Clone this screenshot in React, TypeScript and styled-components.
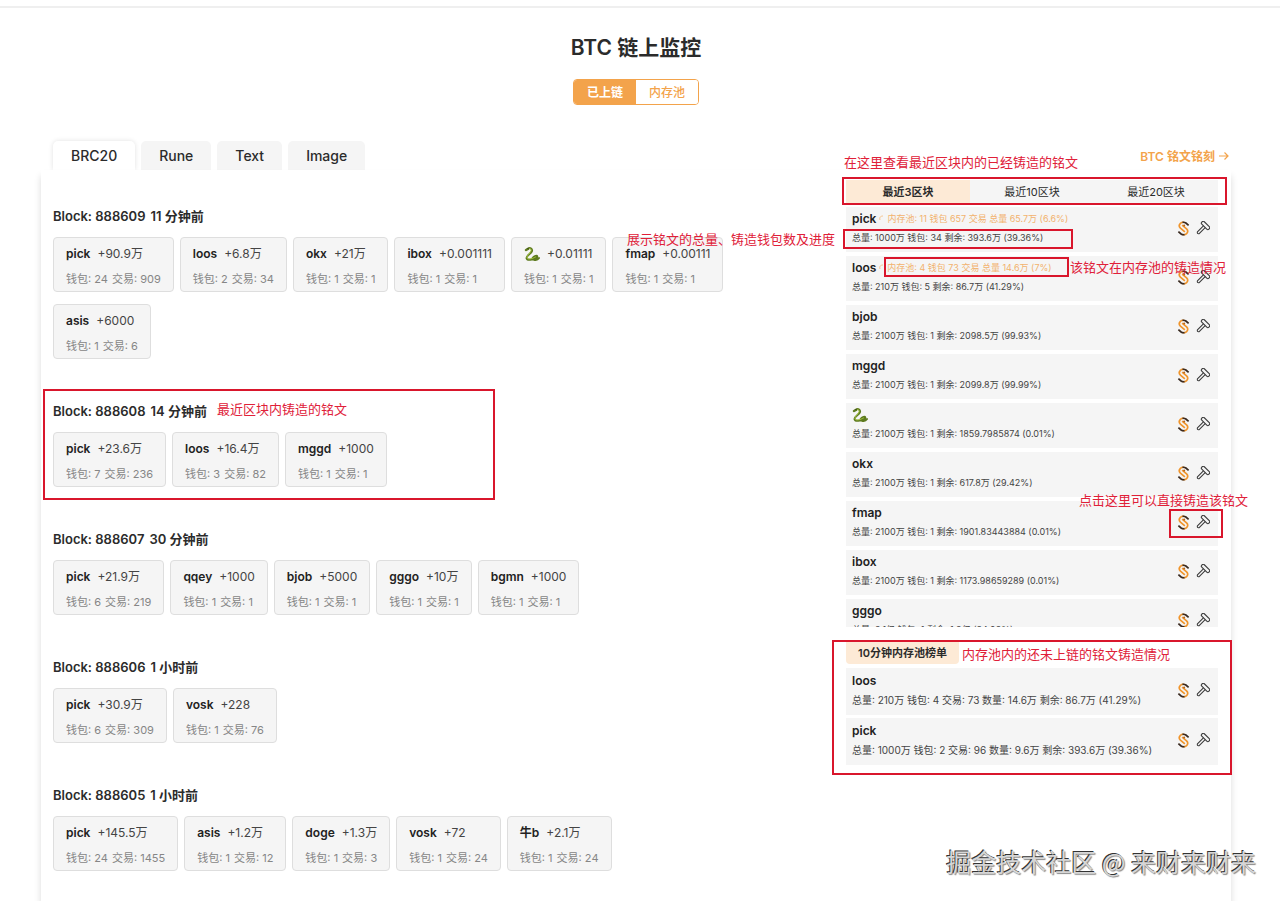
import React from "react";
import styled, { createGlobalStyle, css } from "styled-components";

const ORANGE = "#f3a34b";
const RED = "#d9162c";

const GlobalStyle = createGlobalStyle`
  *, *::before, *::after { box-sizing: border-box; }
  body {
    margin: 0;
    background: #fff;
    color: #2b2b2b;
    font-family: Inter, "Noto Sans CJK SC", sans-serif;
    font-size: 13px;
  }
  button { font: inherit; color: inherit; border: 0; padding: 0; background: none; cursor: pointer; }
  h1, h2, h3, p, ul { margin: 0; padding: 0; }
  ul { list-style: none; }
`;

const Page = styled.div`
  position: relative;
  display: flex;
  flex-direction: column;
  min-height: 100vh;
  padding: 6px 49px 0 41px;
  overflow: hidden;
`;

const TopRule = styled.div`
  height: 2px;
  margin: 0 -49px 0 -41px;
  background: #efefef;
`;

const Header = styled.header`
  display: flex;
  flex-direction: column;
  align-items: center;
  gap: 17px;
  padding-top: 26px;
`;

const Title = styled.h1`
  font-size: 21px;
  line-height: 28px;
  font-weight: 600;
`;

const Segmented = styled.div`
  display: flex;
  width: 126px;
  height: 26px;
  border: 1px solid ${ORANGE};
  border-radius: 4px;
  overflow: hidden;
`;

const Segment = styled.button<{ $active?: boolean }>`
  flex: 1;
  padding-bottom: 2px;
  font-size: 12px;
  font-weight: ${(p) => (p.$active ? 600 : 500)};
  color: ${(p) => (p.$active ? "#fff" : ORANGE)};
  background: ${(p) => (p.$active ? ORANGE : "#fff")};
`;

const TabBar = styled.nav`
  display: flex;
  align-items: flex-end;
  gap: 6px;
  margin-top: 36px;
  padding: 0 2px 0 12px;
`;

const Tab = styled.button<{ $active?: boolean }>`
  height: 29px;
  padding: 0 18px 1px;
  border-radius: 5px 5px 0 0;
  font-size: 14px;
  font-weight: 500;
  background: ${(p) => (p.$active ? "#fff" : "#f5f5f5")};
  box-shadow: ${(p) => (p.$active ? "0 0 5px rgba(0, 0, 0, 0.12)" : "none")};
`;

const InscribeLink = styled.a`
  display: flex;
  align-items: center;
  align-self: center;
  gap: 4px;
  margin-left: auto;
  font-size: 12px;
  font-weight: 600;
  color: ${ORANGE};
  text-decoration: none;
`;

const Panel = styled.main`
  position: relative;
  flex: 1;
  display: flex;
  align-items: flex-start;
  gap: 30px;
  padding: 10px 13px 0 12px;
  background: #fff;
  box-shadow: 0 6px 7px rgba(0, 0, 0, 0.14);
`;

const Blocks = styled.div`
  flex: 1;
  min-width: 0;
  display: flex;
  flex-direction: column;
  gap: 42px;
  padding-top: 26px;
`;

const Block = styled.section`
  position: relative;
`;

const BlockTitle = styled.h2`
  display: flex;
  gap: 5px;
  margin-bottom: 11px;
  font-size: 13px;
  line-height: 20px;
  font-weight: 600;
`;

const Cards = styled.div`
  display: flex;
  flex-wrap: wrap;
  gap: 12px 6px;
`;

const Card = styled.article`
  display: flex;
  flex-direction: column;
  gap: 8px;
  height: 55px;
  padding: 7px 12px;
  border: 1px solid #dedede;
  border-radius: 4px;
  background: #f5f5f5;
`;

const CardHead = styled.div`
  display: flex;
  align-items: center;
  gap: 7px;
  font-size: 12px;
  line-height: 18px;
  color: #444;
`;

const Ticker = styled.h3`
  display: flex;
  align-items: center;
  font-size: 12px;
  line-height: 16px;
  font-weight: 600;
  color: #222;
`;

const CardMeta = styled.div`
  display: flex;
  gap: 4px;
  font-size: 11px;
  line-height: 16px;
  color: #868686;
`;

const Sidebar = styled.aside`
  position: relative;
  width: 372px;
  flex: none;
`;

const RangeTabs = styled.div`
  display: flex;
  margin-bottom: 3px;
  background: #f5f5f5;
`;

const RangeTab = styled.button<{ $active?: boolean }>`
  flex: 1;
  height: 24px;
  padding-bottom: 2px;
  font-size: 11px;
  font-weight: ${(p) => (p.$active ? 600 : 400)};
  background: ${(p) => (p.$active ? "#fdead6" : "transparent")};
`;

const RankList = styled.ul`
  display: flex;
  flex-direction: column;
  gap: 4px;
  height: 420px;
  overflow: hidden;
`;

const PoolList = styled.ul`
  display: flex;
  flex-direction: column;
  gap: 3px;
`;

const PoolTitle = styled.h2`
  display: inline-block;
  margin: 15px 0 4px;
  padding: 0 12px;
  border-radius: 0 0 4px 4px;
  font-size: 11px;
  line-height: 22px;
  font-weight: 600;
  background: #fdead6;
`;

const Row = styled.li<{ $large?: boolean }>`
  flex: none;
  display: flex;
  align-items: flex-start;
  justify-content: space-between;
  padding: ${(p) => (p.$large ? 5 : 4)}px 8px 0 6px;
  background: #f5f5f5;
  height: ${(p) => (p.$large ? 47 : 45)}px;
`;

const RowText = styled.div<{ $large?: boolean }>`
  display: flex;
  flex-direction: column;
  gap: ${(p) => (p.$large ? 3 : 4)}px;
  white-space: nowrap;
`;

const RowHead = styled.div`
  display: flex;
  align-items: center;
  gap: 2px;
`;

const PoolNote = styled.span`
  font-size: 9px;
  line-height: 16px;
  color: #f2b26d;
`;

const RowMeta = styled.p<{ $large?: boolean }>`
  color: #444;
  ${(p) =>
    p.$large
      ? css`
          font-size: 10px;
          line-height: 16px;
        `
      : css`
          font-size: 9px;
          line-height: 14px;
        `}
`;

const Actions = styled.div`
  display: flex;
  gap: 5px;
  padding-top: 10px;
`;

const IconButton = styled.button`
  display: flex;
`;

const Frame = styled.div<{ $x: number; $y: number; $w: number; $h: number }>`
  position: absolute;
  left: ${(p) => p.$x}px;
  top: ${(p) => p.$y}px;
  width: ${(p) => p.$w}px;
  height: ${(p) => p.$h}px;
  border: 2px solid ${RED};
  pointer-events: none;
`;

const Note = styled.p<{ $x: number; $y: number }>`
  position: absolute;
  left: ${(p) => p.$x}px;
  top: ${(p) => p.$y}px;
  font-size: 13px;
  line-height: 18px;
  color: #e02038;
  white-space: nowrap;
  pointer-events: none;
`;

const Watermark = styled.p`
  position: absolute;
  right: 24px;
  bottom: 22px;
  font-family: "Noto Sans CJK SC", sans-serif;
  font-size: 25px;
  line-height: 36px;
  color: #d6d6d6;
  text-shadow: -1px -1px 0 #333, 1px 1px 1px #888;
  pointer-events: none;
`;

const Snake = () => (
  <svg width="16" height="16" viewBox="0 0 32 32" fill="none" strokeLinecap="round" aria-label="snake">
    <path d="M7 6C12 2 17 5 16 10C15 15 5 19 5 24C6 30 18 27 24 24C28 22 27 19 23 20C18 22 15 25 19 27C24 29 28 27 30 24" stroke="#5d7a1f" strokeWidth="4" />
    <path d="M8 6C12 3 15 6 14 10C12 15 5 19 6 24C8 28 18 25 23 22" stroke="#a5c340" strokeWidth="2" />
    <path d="M4 8L8 6" stroke="#5d7a1f" strokeWidth="5" />
    <circle cx="8" cy="5" r="1" fill="#222" />
  </svg>
);

const Coin = () => (
  <svg width="13" height="15" viewBox="0 0 36 44" fill="none" strokeWidth="5">
    <path d="M20 4C15 3 12 4 9 7C4 12 5 17 9 21L22 32" stroke="#f0952c" />
    <path d="M16 40C21 41 24 40 27 37C32 32 31 27 27 23L14 12" stroke="#f0952c" />
    <path d="M15 4C19 3 22 4 25 6L33 13" stroke="#3a2a20" />
    <path d="M21 40C17 41 14 40 11 38L3 31" stroke="#3a2a20" />
    <circle cx="20" cy="13" r="3" fill="#b5651d" />
  </svg>
);

const Hammer = () => (
  <svg width="15" height="15" viewBox="0 0 30 30" fill="none" stroke="#3c3c3c" strokeWidth="2.2" strokeLinejoin="round">
    <g transform="rotate(45 20 10)">
      <rect x="10" y="5" width="20" height="7" rx="3" />
      <path d="M17.500 12V29Q20 33 22.500 29V12" />
    </g>
  </svg>
);

const Spinner = () => (
  <svg width="7" height="8" viewBox="0 0 7 8" fill="none">
    <path d="M2 5C1 2 3 1 5 1" stroke="#f5c48d" strokeWidth="1" />
  </svg>
);

const Arrow = () => (
  <svg width="10" height="10" viewBox="0 0 10 10" fill="none" stroke={ORANGE} strokeWidth="1.2">
    <path d="M0 5H9M5.5 1.500L9 5L5.500 8.500" />
  </svg>
);

const SNAKE = "snake";

type Mint = [name: string, amount: string, wallets: number, txs: number];

const blocks: { height: number; age: string; mints: Mint[]; marked?: boolean }[] = [
  {
    height: 888609,
    age: "11 分钟前",
    mints: [
      ["pick", "+90.9万", 24, 909],
      ["loos", "+6.8万", 2, 34],
      ["okx", "+21万", 1, 1],
      ["ibox", "+0.001111", 1, 1],
      [SNAKE, "+0.01111", 1, 1],
      ["fmap", "+0.00111", 1, 1],
      ["asis", "+6000", 1, 6],
    ],
  },
  {
    height: 888608,
    age: "14 分钟前",
    marked: true,
    mints: [
      ["pick", "+23.6万", 7, 236],
      ["loos", "+16.4万", 3, 82],
      ["mggd", "+1000", 1, 1],
    ],
  },
  {
    height: 888607,
    age: "30 分钟前",
    mints: [
      ["pick", "+21.9万", 6, 219],
      ["qqey", "+1000", 1, 1],
      ["bjob", "+5000", 1, 1],
      ["gggo", "+10万", 1, 1],
      ["bgmn", "+1000", 1, 1],
    ],
  },
  {
    height: 888606,
    age: "1 小时前",
    mints: [
      ["pick", "+30.9万", 6, 309],
      ["vosk", "+228", 1, 76],
    ],
  },
  {
    height: 888605,
    age: "1 小时前",
    mints: [
      ["pick", "+145.5万", 24, 1455],
      ["asis", "+1.2万", 1, 12],
      ["doge", "+1.3万", 1, 3],
      ["vosk", "+72", 1, 24],
      ["牛b", "+2.1万", 1, 24],
    ],
  },
];

type Rank = { name: string; meta: string; pool?: string };

const ranks: Rank[] = [
  { name: "pick", meta: "总量: 1000万 钱包: 34 剩余: 393.6万 (39.36%)", pool: "内存池: 11 钱包 657 交易 总量 65.7万 (6.6%)" },
  { name: "loos", meta: "总量: 210万 钱包: 5 剩余: 86.7万 (41.29%)", pool: "内存池: 4 钱包 73 交易 总量 14.6万 (7%)" },
  { name: "bjob", meta: "总量: 2100万 钱包: 1 剩余: 2098.5万 (99.93%)" },
  { name: "mggd", meta: "总量: 2100万 钱包: 1 剩余: 2099.8万 (99.99%)" },
  { name: SNAKE, meta: "总量: 2100万 钱包: 1 剩余: 1859.7985874 (0.01%)" },
  { name: "okx", meta: "总量: 2100万 钱包: 1 剩余: 617.8万 (29.42%)" },
  { name: "fmap", meta: "总量: 2100万 钱包: 1 剩余: 1901.83443884 (0.01%)" },
  { name: "ibox", meta: "总量: 2100万 钱包: 1 剩余: 1173.98659289 (0.01%)" },
  { name: "gggo", meta: "总量: 2.1亿 钱包: 1 剩余: 1.8亿 (84.92%)" },
];

const pool: Rank[] = [
  { name: "loos", meta: "总量: 210万 钱包: 4 交易: 73 数量: 14.6万 剩余: 86.7万 (41.29%)" },
  { name: "pick", meta: "总量: 1000万 钱包: 2 交易: 96 数量: 9.6万 剩余: 393.6万 (39.36%)" },
];

const TickerName = ({ name }: { name: string }) => <Ticker>{name === SNAKE ? <Snake /> : name}</Ticker>;

const RankRow = ({ item, large }: { item: Rank; large?: boolean }) => (
  <Row $large={large}>
    <RowText $large={large}>
      <RowHead>
        <TickerName name={item.name} />
        {item.pool && (
          <>
            <Spinner />
            <PoolNote>{item.pool}</PoolNote>
          </>
        )}
      </RowHead>
      <RowMeta $large={large}>{item.meta}</RowMeta>
    </RowText>
    <Actions>
      <IconButton aria-label="Trade">
        <Coin />
      </IconButton>
      <IconButton aria-label="Mint">
        <Hammer />
      </IconButton>
    </Actions>
  </Row>
);

export default function App() {
  return (
    <>
      <GlobalStyle />
      <Page>
        <TopRule />
        <Header>
          <Title>BTC 链上监控</Title>
          <Segmented>
            <Segment $active>已上链</Segment>
            <Segment>内存池</Segment>
          </Segmented>
        </Header>
        <TabBar>
          <Tab $active>BRC20</Tab>
          <Tab>Rune</Tab>
          <Tab>Text</Tab>
          <Tab>Image</Tab>
          <InscribeLink href="#inscribe">
            BTC 铭文铭刻 <Arrow />
          </InscribeLink>
        </TabBar>
        <Panel>
          <Blocks>
            {blocks.map((b) => (
              <Block key={b.height}>
                <BlockTitle>
                  <span>Block: {b.height}</span>
                  <span>{b.age}</span>
                </BlockTitle>
                <Cards>
                  {b.mints.map(([name, amount, wallets, txs]) => (
                    <Card key={name}>
                      <CardHead>
                        <TickerName name={name} />
                        <span>{amount}</span>
                      </CardHead>
                      <CardMeta>
                        <span>钱包: {wallets}</span>
                        <span>交易: {txs}</span>
                      </CardMeta>
                    </Card>
                  ))}
                </Cards>
                {b.marked && (
                  <>
                    <Frame $x={-10} $y={-12} $w={452} $h={111} />
                    <Note $x={164} $y={-1}>最近区块内铸造的铭文</Note>
                  </>
                )}
              </Block>
            ))}
          </Blocks>
          <Sidebar>
            <RangeTabs>
              <RangeTab $active>最近3区块</RangeTab>
              <RangeTab>最近10区块</RangeTab>
              <RangeTab>最近20区块</RangeTab>
            </RangeTabs>
            <RankList>
              {ranks.map((r) => (
                <RankRow key={r.name} item={r} />
              ))}
            </RankList>
            <PoolTitle>10分钟内存池榜单</PoolTitle>
            <PoolList>
              {pool.map((r) => (
                <RankRow key={r.name} item={r} large />
              ))}
            </PoolList>
            <Frame $x={-4} $y={-3} $w={385} $h={28} />
            <Frame $x={-3} $y={49} $w={230} $h={20} />
            <Frame $x={38} $y={77} $w={185} $h={20} />
            <Frame $x={323} $y={329} $w={54} $h={29} />
            <Frame $x={-14} $y={460} $w={400} $h={135} />
            <Note $x={-2} $y={-27}>在这里查看最近区块内的已经铸造的铭文</Note>
            <Note $x={-219} $y={50}>展示铭文的总量、铸造钱包数及进度</Note>
            <Note $x={224} $y={78}>该铭文在内存池的铸造情况</Note>
            <Note $x={233} $y={311}>点击这里可以直接铸造该铭文</Note>
            <Note $x={116} $y={465}>内存池内的还未上链的铭文铸造情况</Note>
          </Sidebar>
        </Panel>
        <Watermark>掘金技术社区 @ 来财来财来</Watermark>
      </Page>
    </>
  );
}
